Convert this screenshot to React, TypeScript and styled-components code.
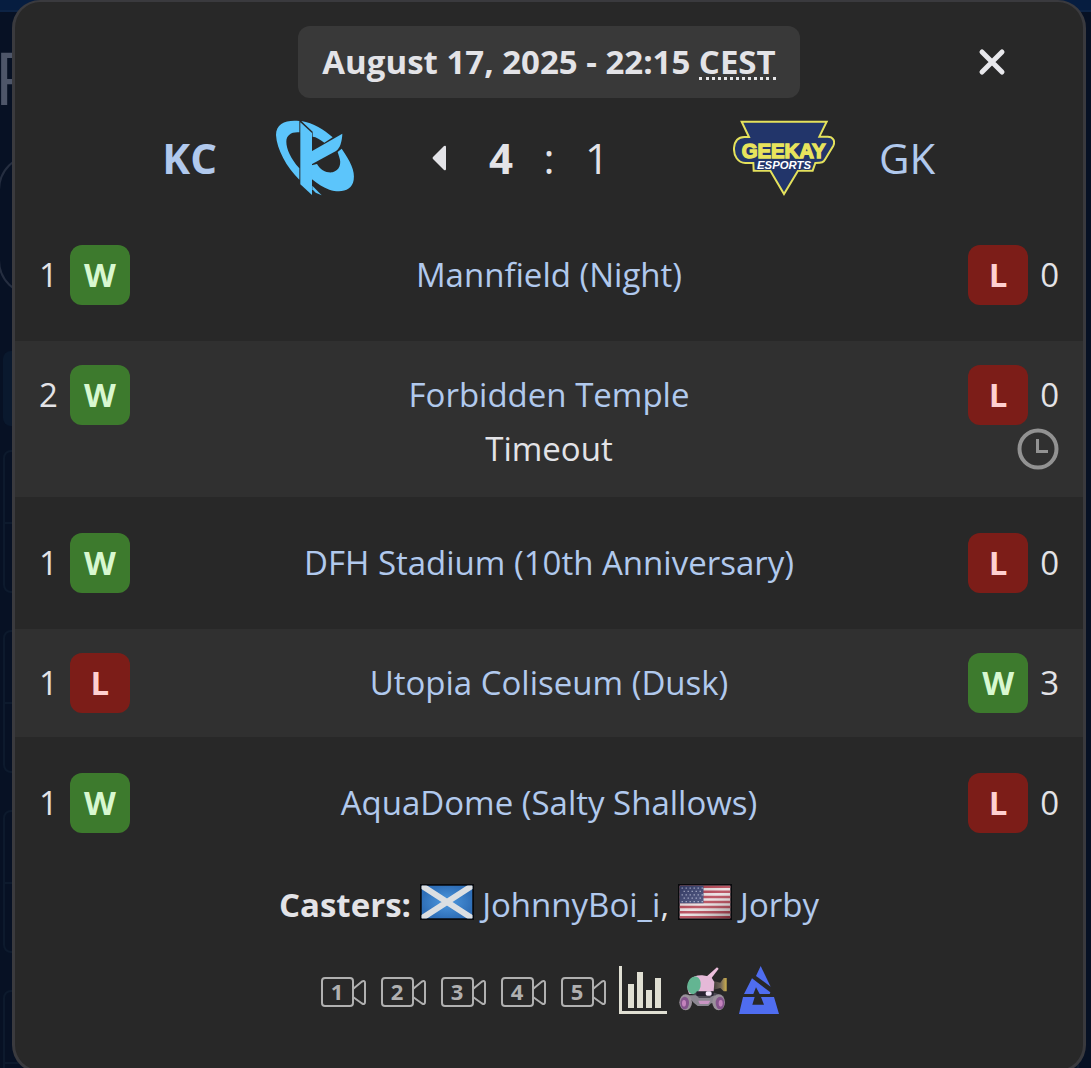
import React, { Fragment } from "react";
import styled, { createGlobalStyle } from "styled-components";

const Global = createGlobalStyle`
  * { box-sizing: border-box; }
  body {
    margin: 0;
    background: #071124;
    color: #e3e3e7;
    font-family: "Open Sans", "Noto Sans", sans-serif;
    font-size: 33px;
    line-height: 48px;
  }
  a { color: #b1c9ed; text-decoration: none; }
  svg { display: block; }
`;

const Page = styled.div`
  position: relative;
  height: 100vh;
  overflow: hidden;
`;

const Behind = styled.div`
  position: absolute;
  inset: 0;
  overflow: hidden;
`;

const TopBar = styled.div`
  height: 12px;
  background: #061d40;
  border-bottom: 2px solid #0d2344;
`;

const PageTitle = styled.div`
  margin: 27px 0 39px -6px;
  color: #4e5669;
  font-size: 73px;
  line-height: 76px;
`;

const Pill = styled.div`
  height: 142px;
  margin: 0 12px 55px -2px;
  border: 2px solid #252e40;
  border-radius: 36px;
`;

const RoundName = styled.div`
  height: 75px;
  margin: 0 12px 24px 3px;
  border-radius: 8px;
  background: #0a192e;
`;

const Pairing = styled.div`
  display: grid;
  grid-template-rows: 1fr 1fr;
  height: 143px;
  margin: 0 12px 37px 3px;
  border: 2px solid #0d1a2d;
  border-radius: 8px;
`;

const Slot = styled.div`
  & + & { border-top: 2px solid #0d1a2d; }
`;

const Dialog = styled.section`
  position: relative;
  margin: 0 5px 0 12px;
  padding: 24px 0 56px;
  border: 3px solid #3a3a3e;
  border-top-width: 2px;
  border-radius: 28px;
  background: #282828;
`;

const Header = styled.header`
  display: grid;
  grid-template-columns: 1fr auto 1fr;
  align-items: center;
`;

const DateChip = styled.h1`
  grid-column: 2;
  margin: 0;
  padding: 12px 24px;
  border-radius: 12px;
  background: #393939;
  font-size: 33px;
  line-height: 48px;
  font-weight: 700;
`;

const Zone = styled.abbr`
  display: inline-block;
  border-bottom: 3px dotted #e6e6e8;
  line-height: 30px;
  text-decoration: none;
`;

const CloseButton = styled.button`
  display: flex;
  align-items: center;
  justify-content: center;
  justify-self: end;
  width: 48px;
  height: 48px;
  margin-right: 67px;
  padding: 0;
  border: 0;
  background: none;
  color: #e8e8ec;
  cursor: pointer;
`;

const ScoreRow = styled.div`
  display: grid;
  grid-template-columns: 1fr 368px 1fr;
  align-items: center;
  min-height: 120px;
  margin-bottom: 3px;
  font-size: 42px;
`;

const Team = styled.a<{ $away?: boolean; $won?: boolean }>`
  display: flex;
  flex-direction: ${(p) => (p.$away ? "row-reverse" : "row")};
  align-items: center;
  justify-content: flex-end;
  gap: ${(p) => (p.$away ? 44 : 48)}px;
  font-weight: ${(p) => (p.$won ? 700 : 400)};
`;

const Score = styled.div`
  display: grid;
  grid-template-columns: 64px 60px 36px 60px 64px;
  align-items: center;
  justify-content: center;
  justify-items: center;
`;

const Points = styled.span<{ $won?: boolean }>`
  font-weight: ${(p) => (p.$won ? 700 : 400)};
`;

const Games = styled.ol`
  display: grid;
  gap: 12px;
  margin: 0;
  padding: 0;
  list-style: none;
`;

const Game = styled.li`
  display: grid;
  grid-template-columns: 106px 1fr 106px;
  align-items: center;
  padding: 24px;
  text-align: center;
  &:nth-child(even) { background: #303030; }
`;

const Side = styled.div<{ $away?: boolean }>`
  display: flex;
  flex-direction: ${(p) => (p.$away ? "row-reverse" : "row")};
  align-items: center;
  gap: 12px;
`;

const Result = styled.span<{ $win: boolean }>`
  width: 60px;
  border-radius: 12px;
  background: ${(p) => (p.$win ? "#3d7a2d" : "#7c1d18")};
  color: ${(p) => (p.$win ? "#d8f8d0" : "#ffd0d0")};
  font-weight: 700;
  line-height: 60px;
`;

const Timeout = styled.span`
  grid-column: 2;
`;

const ClockCell = styled.span`
  justify-self: end;
`;

const Casters = styled.p`
  margin: 24px 0 37px;
  text-align: center;
`;

const Flag = styled.svg`
  display: inline-block;
  width: 54px;
  height: 36px;
  vertical-align: -3px;
`;

const Links = styled.nav`
  display: flex;
  justify-content: center;
  gap: 12px;
`;

const KcLogo = () => (
  <svg width="100" height="76" viewBox="15 63 300 228" fill="#5cc5fb" aria-hidden="true">
    <path d="M118 66C80 62 48 72 48 108C50 150 80 206 118 242V208C92 178 79 150 79 128C79 108 95 98 118 100Z" />
    <path d="M121 70L156 102V288L121 256Z" />
    <path d="M124 66C160 72 192 92 218 115L193 131C180 121 169 114 158 113V98Z" />
    <path d="M155 157L247 104C246 125 241 147 228 156L155 196Z" />
    <path d="M245 149C270 185 286 215 281 243C276 276 242 283 208 272C190 265 174 256 155 240V199L171 195C180 212 200 223 218 220C238 214 246 196 237 172L233 159Z" />
    <path d="M157 260L185 289L167 281L157 271Z" />
  </svg>
);

const GkLogo = () => (
  <svg width="102" height="76" viewBox="51 48 306 228" aria-hidden="true">
    <path
      d="M77 53H332L310 98H335C352 98 358 112 352 125L328 165C323 175 318 177 298 177L290 200H246L204 270L163 200H113L112 177H88C65 176 53 155 54 132C56 112 66 99 85 99H99Z"
      fill="#22356a"
      stroke="#e4e15c"
      strokeWidth="6"
    />
    <g fontFamily="Liberation Sans, Arial, sans-serif" fontWeight="700" textAnchor="middle">
      <text x="203" y="163" fontSize="61" fill="#e8e45c" stroke="#e8e45c" strokeWidth="4">GEEKAY</text>
      <text x="204" y="196" fontSize="34" fontStyle="italic" fill="#fff" stroke="#22356a" strokeWidth="6" paintOrder="stroke">ESPORTS</text>
    </g>
  </svg>
);

const ClockIcon = () => (
  <svg width="42" height="42" viewBox="0 0 42 42" fill="none" stroke="#929292" role="img" aria-label="Timeout taken">
    <circle cx="21" cy="21" r="18.5" strokeWidth="4" />
    <path d="M20.5 11V23.5H31" strokeWidth="3" />
  </svg>
);

const VodIcon = ({ n }: { n: number }) => (
  <svg width="48" height="48" viewBox="0 0 48 48" fill="none" stroke="#b0b0b0" strokeWidth="2" strokeLinejoin="round">
    <rect x="3" y="12" width="31" height="28" rx="3" />
    <path d="M34 23L43 15.500Q46 14 46 17V36Q46 39 43 37.500L34 31" />
    <text x="18" y="34" textAnchor="middle" fontSize="22" fontWeight="700" fill="#b0b0b0" stroke="none">{n}</text>
  </svg>
);

const ChartIcon = () => (
  <svg width="48" height="48" viewBox="0 0 48 48" fill="#e0dfd3">
    <path d="M0 0H3V45H48V48H0ZM9 18H15V42H9ZM18 6H24V42H18ZM27 24H33V42H27ZM36 12H42V42H36Z" />
  </svg>
);

const BuggyIcon = () => (
  <svg width="48" height="48" viewBox="0 0 144 144">
    <defs>
      <linearGradient id="cannon">
        <stop offset="0" stopColor="#3b3835" />
        <stop offset=".6" stopColor="#75695a" />
        <stop offset="1" stopColor="#d0b24e" />
      </linearGradient>
    </defs>
    <path d="M100 44L124 50L134 36H143V76H134L124 66L100 72Z" fill="url(#cannon)" />
    <path d="M82 32L114 4L119 8L96 38Z" fill="#edbfdc" />
    <path d="M32 42Q44 27 70 28L96 32L106 48L104 76L60 84L30 84Q20 62 32 42Z" fill="#e5b9d8" />
    <ellipse cx="45" cy="58" rx="20" ry="27" fill="#63b592" transform="rotate(14 45 58)" />
    <path d="M48 80H106L134 90V102H34Z" fill="#4c4a54" />
    <path d="M24 88H52L60 96H92L104 88L124 92V112H96L88 120H56L44 110Z" fill="#8b8791" />
    <rect x="52" y="76" width="52" height="14" rx="3" fill="#282331" />
    <rect x="80" y="76" width="18" height="13" rx="5" fill="#f5e5fa" />
    <path d="M58 104H94L88 114H62Z" fill="#c995c4" />
    <ellipse cx="20" cy="109" rx="19" ry="24" fill="#9a919b" />
    <ellipse cx="17" cy="111" rx="13" ry="19" fill="#84548c" />
    <ellipse cx="15" cy="112" rx="6" ry="10" fill="#c483bd" />
    <ellipse cx="119" cy="109" rx="19" ry="24" fill="#9a919b" />
    <ellipse cx="123" cy="111" rx="13" ry="19" fill="#84548c" />
    <ellipse cx="125" cy="112" rx="6" ry="10" fill="#c483bd" />
  </svg>
);

const BlastIcon = () => (
  <svg width="40" height="48" viewBox="0 0 120 144" fill="#4f6df0">
    <path d="M65 0L95 62L51 30Z" />
    <path d="M39 37L94 79L92 84H62L51 64L43 84H15Z" />
    <path d="M12 93H47L40 116H75L66 93H105L120 144H0Z" />
  </svg>
);

const ScotlandFlag = () => (
  <Flag viewBox="0 0 54 36" role="img" aria-label="Scotland">
    <defs>
      <radialGradient id="saltire">
        <stop offset="0" stopColor="#4f9ae0" />
        <stop offset="1" stopColor="#2f6fb8" />
      </radialGradient>
    </defs>
    <rect width="54" height="36" fill="#08090c" />
    <svg x="1.500" y="1.500" width="51" height="33" viewBox="0 0 51 33">
      <rect width="51" height="33" fill="url(#saltire)" />
      <path d="M0 0L51 33M51 0L0 33" stroke="#dcdfe2" strokeWidth="6" />
    </svg>
  </Flag>
);

const UsFlag = () => (
  <Flag viewBox="0 0 54 36" role="img" aria-label="United States">
    <defs>
      <linearGradient id="shade" x2="1" y2="1">
        <stop offset="0" stopColor="#000" stopOpacity=".15" />
        <stop offset=".5" stopColor="#fff" stopOpacity=".15" />
        <stop offset="1" stopColor="#000" stopOpacity=".35" />
      </linearGradient>
    </defs>
    <rect width="54" height="36" fill="#08090c" />
    <svg x="1.500" y="1.500" width="51" height="33" viewBox="0 0 51 39" preserveAspectRatio="none">
      <rect width="51" height="39" fill="#e9dfe0" />
      <path d="M0 1.500H51M0 7.500H51M0 13.500H51M0 19.500H51M0 25.500H51M0 31.500H51M0 37.500H51" stroke="#b23c4c" strokeWidth="3" />
      <rect width="24" height="21" fill="#3a4272" />
      <path d="M2 3H24M4 7H24M2 11H24M4 15H24M2 19H24" stroke="#9da3c4" strokeWidth="1.500" strokeDasharray="1.500 2.500" />
      <rect width="51" height="39" fill="url(#shade)" />
    </svg>
  </Flag>
);

const games = [
  { map: "Mannfield (Night)", home: 1, away: 0 },
  { map: "Forbidden Temple", home: 2, away: 0, timeout: true },
  { map: "DFH Stadium (10th Anniversary)", home: 1, away: 0 },
  { map: "Utopia Coliseum (Dusk)", home: 1, away: 3 },
  { map: "AquaDome (Salty Shallows)", home: 1, away: 0 },
];

export default function App() {
  return (
    <Page>
      <Global />
      <Behind aria-hidden="true">
        <TopBar />
        <PageTitle>P</PageTitle>
        <Pill />
        <RoundName />
        {[0, 1, 2, 3].map((i) => (
          <Pairing key={i}>
            <Slot />
            <Slot />
          </Pairing>
        ))}
      </Behind>
      <Dialog role="dialog" aria-label="Match details">
        <Header>
          <DateChip>
            August 17, 2025 - 22:15 <Zone>CEST</Zone>
          </DateChip>
          <CloseButton type="button" aria-label="Close">
            <svg width="28" height="28" viewBox="0 0 28 28" stroke="currentColor" strokeWidth="5" strokeLinecap="round">
              <path d="M4 4L24 24M24 4L4 24" />
            </svg>
          </CloseButton>
        </Header>

        <ScoreRow>
          <Team href="#kc" $won>
            <span>KC</span>
            <KcLogo />
          </Team>
          <Score>
            <svg width="14" height="26" viewBox="0 0 14 26" fill="#e3e3e7" aria-hidden="true">
              <path d="M12 1Q14 0 14 2V24Q14 26 12 25L1 14Q0 13 1 12Z" />
            </svg>
            <Points $won>4</Points>
            <span>:</span>
            <Points>1</Points>
          </Score>
          <Team href="#gk" $away>
            <span>GK</span>
            <GkLogo />
          </Team>
        </ScoreRow>

        <Games>
          {games.map((g) => (
            <Game key={g.map}>
              <Side>
                <span>{g.home}</span>
                <Result $win={g.home > g.away}>{g.home > g.away ? "W" : "L"}</Result>
              </Side>
              <a href="#map">{g.map}</a>
              <Side $away>
                <span>{g.away}</span>
                <Result $win={g.away > g.home}>{g.away > g.home ? "W" : "L"}</Result>
              </Side>
              {g.timeout && (
                <Fragment>
                  <Timeout>Timeout</Timeout>
                  <ClockCell>
                    <ClockIcon />
                  </ClockCell>
                </Fragment>
              )}
            </Game>
          ))}
        </Games>

        <Casters>
          <b>Casters:</b> <ScotlandFlag /> <a href="#johnnyboi">JohnnyBoi_i</a>, <UsFlag /> <a href="#jorby">Jorby</a>
        </Casters>

        <Links aria-label="Match links">
          {[1, 2, 3, 4, 5].map((n) => (
            <a key={n} href={`#vod${n}`} aria-label={`Watch game ${n}`}>
              <VodIcon n={n} />
            </a>
          ))}
          <a href="#stats" aria-label="Statistics"><ChartIcon /></a>
          <a href="#replays" aria-label="Replays"><BuggyIcon /></a>
          <a href="#blast" aria-label="Match page"><BlastIcon /></a>
        </Links>
      </Dialog>
    </Page>
  );
}
